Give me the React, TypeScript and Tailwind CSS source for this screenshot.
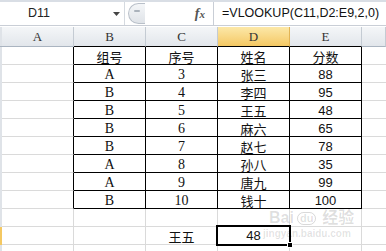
import React from "react";

type Row = [string, string, string, string];

const rows: Row[] = [
  ["组号", "序号", "姓名", "分数"],
  ["A", "3", "张三", "88"],
  ["B", "4", "李四", "95"],
  ["B", "5", "王五", "48"],
  ["B", "6", "麻六", "65"],
  ["B", "7", "赵七", "78"],
  ["A", "8", "孙八", "35"],
  ["A", "9", "唐九", "99"],
  ["B", "10", "钱十", "100"],
];

const cjk = "font-['Noto_Sans_CJK_SC',sans-serif] text-[13px]";
const serif = "font-['Liberation_Serif','Noto_Sans_CJK_SC',serif] text-[14px]";
const sans = "font-['Liberation_Sans',sans-serif] text-[13px]";

const isLatin = (s: string) => /^[A-Za-z0-9]+$/.test(s);

const Toolbar = () => (
  <div className="h-[27px] flex flex-col bg-white">
    <div className="h-[2px] bg-[#d9dee5]"></div>
    <div className="flex h-[24px] border-b border-[#c9ced6]">
      {/* name box */}
      <div className="w-[125px] flex items-center border-r border-[#d5dae0] font-['Liberation_Sans',sans-serif] text-[12.5px] text-[#222]">
        <span className="pl-[28px]">D11</span>
        <svg className="ml-auto mr-[4px]" width="7" height="4" viewBox="0 0 7 4">
          <path d="M0 0h7L3.5 4z" fill="#444" />
        </svg>
      </div>
      <div className="w-[20px] flex items-stretch py-[1px] pl-[3px]">
        <div className="flex-1 rounded-l-full border border-r-0 border-[#b9c0c9] bg-gradient-to-b from-[#f4f6f8] to-[#dfe3e8] flex items-start pt-[6px] pl-[5px]">
          <div className="w-[6px] h-[2px] bg-[#aab2bb] rounded-full"></div>
        </div>
      </div>
      <div className="w-[68px] flex items-center justify-end pr-[8px]">
        <span className="font-['Liberation_Serif',serif] italic font-bold text-[14px] text-[#555]">
          f<span className="text-[11px]">x</span>
        </span>
      </div>
      <div className="flex-1 flex items-center border-l border-[#c9ced6] pl-[8px] font-['Liberation_Sans',sans-serif] text-[12.5px] text-[#111] whitespace-nowrap">
        =VLOOKUP(C11,D2:E9,2,0)
      </div>
    </div>
  </div>
);

const HeaderRow = () => {
  const cols = ["A", "B", "C", "D", "E", ""];
  return (
    <div className="flex h-[20px]">
      <div className="w-[2px] bg-[#dfe3e8] border-b border-[#aab4c0]"></div>
      {cols.map((c, i) => (
        <div
          key={i}
          className={
            "flex items-center justify-center border-r border-b text-[13px] text-[#333] font-['Liberation_Serif',serif] " +
            (i === 5 ? "flex-1 " : "w-[72px] ") +
            (c === "D"
              ? "bg-gradient-to-b from-[#fce8a8] to-[#f4c862] border-r-[#e2b455] "
              : "bg-gradient-to-b from-[#f4f6f8] to-[#e2e6eb] border-r-[#c4cbd3] ") +
            (i >= 1 && i <= 4 ? "border-b-black" : "border-b-[#aab4c0]")
          }
        >
          {c}
        </div>
      ))}
    </div>
  );
};

const DataRow = ({ row, idx }: { row: Row | null; idx: number }) => {
  const inTable = row !== null;
  return (
    <div className="flex h-[18px]">
      <div className={"w-[2px] " + (idx === 10 ? "bg-[#f4c862]" : "bg-[#dfe3e8]")}></div>
      <div
        className={
          "w-[72px] border-b border-r border-b-[#dadada] " +
          (inTable ? "border-r-black" : "border-r-[#dadada]")
        }
      ></div>
      {[0, 1, 2, 3].map((j) => {
        let text = row ? row[j] : "";
        if (!row && idx === 10) text = j === 1 ? "王五" : "";
        const font = isLatin(text) ? (j === 3 ? sans : serif) : cjk;
        return (
          <div
            key={j}
            className={
              "w-[72px] flex items-center justify-center border-b border-r leading-none text-[#111] " +
              font +
              " " +
              (inTable ? "border-black" : "border-[#dadada]")
            }
          >
            <span className={isLatin(text) ? "pt-[2px]" : "pt-[1px]"}>{text}</span>
          </div>
        );
      })}
      <div className="flex-1 border-b border-[#dadada]"></div>
    </div>
  );
};

export default function App() {
  return (
    <div className="relative w-[386px] h-[251px] overflow-hidden bg-white">
      <Toolbar />
      <HeaderRow />
      {rows.map((r, i) => (
        <DataRow key={i} row={r} idx={i} />
      ))}
      <DataRow row={null} idx={9} />
      <DataRow row={null} idx={10} />
      <DataRow row={null} idx={11} />

      {/* selected cell D11 */}
      <div className="absolute left-[216px] top-[225px] w-[75px] h-[21px] border-2 border-black flex items-center justify-center">
        <span className={sans + " text-[#111] pt-[1px]"}>48</span>
      </div>
      <div className="absolute left-[287px] top-[242px] w-[6px] h-[6px] bg-black border border-white"></div>

      {/* watermark */}
      <div className="absolute left-[269px] top-[210px] pointer-events-none flex items-center gap-[3px] font-['Liberation_Sans','Noto_Sans_CJK_SC',sans-serif] font-bold text-[16px] leading-none text-black/[0.13]">
        <span>Bai</span>
        <span className="rounded-full border border-black/[0.15] px-[2px] text-[11px]">du</span>
        <span className="ml-[3px]">经验</span>
      </div>
      <div className="absolute left-[263px] top-[229px] pointer-events-none font-['Liberation_Sans',sans-serif] font-bold text-[10px] leading-none text-black/[0.12]">
        jingyan.baidu.com
      </div>
    </div>
  );
}
